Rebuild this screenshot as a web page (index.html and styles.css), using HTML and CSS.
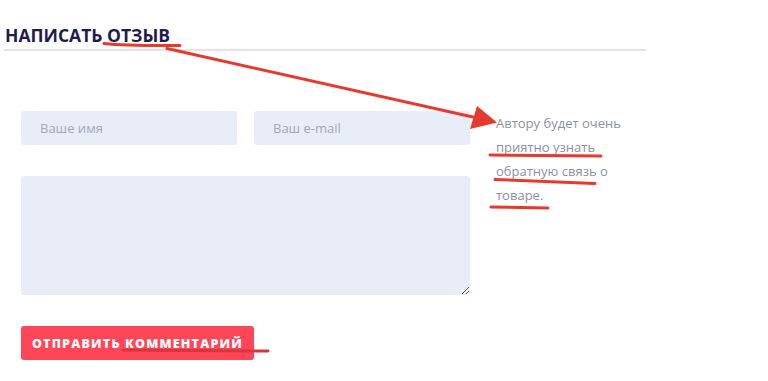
FILE: index.html
```html
<!DOCTYPE html>
<html lang="ru">
<head>
    <meta charset="UTF-8">
    <meta name="viewport" content="width=device-width, initial-scale=1.0">
    <title>Написать отзыв</title>
    <link rel="stylesheet" href="styles.css">
</head>
<body>
    <div class="review">
        <h2 class="review-title">НАПИСАТЬ ОТЗЫВ</h2>

        <div class="review-body">
            <form class="review-form">
                <input class="field" type="text" placeholder="Ваше имя">
                <input class="field" type="email" placeholder="Ваш e-mail">
                <textarea class="field field-text"></textarea>
                <button class="send" type="button">ОТПРАВИТЬ КОММЕНТАРИЙ</button>
            </form>
            <p class="review-note">Автору будет очень приятно узнать обратную связь о товаре.</p>
        </div>
    </div>

    <!-- red marks drawn over the screenshot -->
    <svg class="marks" width="768" height="381" viewBox="0 0 768 381">
        <path d="M104 43.5 C128 46, 156 45.5, 180 45.5" />
        <path d="M167 48.5 L484 119.5" />
        <polygon points="497,122.5 477,106 470,129" />
        <path d="M490 155 L601 156" />
        <path d="M495 179.5 L595 183.5" />
        <path d="M491 207 L548 208" />
        <path class="dark" d="M123 350 L268 351" />
    </svg>
</body>
</html>
```

FILE: styles.css
```css
body{
    margin: 0px;
    font-family: "Open Sans", "Liberation Sans", sans-serif;
    background: white;
}
.review{
    width: 642px;
    padding: 24px 0 0 4px;
}
.review-title{
    margin: 0px;
    padding: 0 0 2px 1px;
    font-size: 17.5px;
    font-weight: 700;
    line-height: 23px;
    color: #1f1b4f;
    border-bottom: 2px solid #e3e4e9;
}
.review-body{
    display: flex;
    align-items: flex-start;
    gap: 26px;
    margin-top: 60px;
    padding-left: 17px;
}
.review-form{
    display: grid;
    grid-template-columns: 216px 216px;
    column-gap: 17px;
    row-gap: 31px;
    width: 449px;
}
.field{
    box-sizing: border-box;
    height: 34px;
    padding: 0 19px;
    border: 0px;
    border-radius: 3px;
    background-color: #e9edf8;
    font-family: inherit;
    font-size: 13px;
    color: #555a6b;
    outline: none;
}
.field::placeholder{
    color: #a3a8b9;
}
.field-text{
    grid-column: 1 / 3;
    height: 119px;
    padding: 10px 19px;
    resize: both;
}
.send{
    justify-self: start;
    width: 233px;
    height: 34px;
    padding: 0px;
    border: 0px;
    border-radius: 3px;
    background-color: #ff4558;
    color: white;
    font-family: inherit;
    font-size: 12.5px;
    font-weight: 800;
    letter-spacing: 1.2px;
    cursor: pointer;
}
.review-note{
    width: 140px;
    margin: 0px;
    font-size: 13px;
    line-height: 24px;
    color: #8c91a2;
}
.marks{
    position: absolute;
    top: 0px;
    left: 0px;
    pointer-events: none;
}
.marks path{
    fill: none;
    stroke: #e63a2e;
    stroke-width: 3;
    stroke-linecap: round;
}
.marks polygon{
    fill: #e63a2e;
}
.marks .dark{
    stroke: #d8363b;
}
```
